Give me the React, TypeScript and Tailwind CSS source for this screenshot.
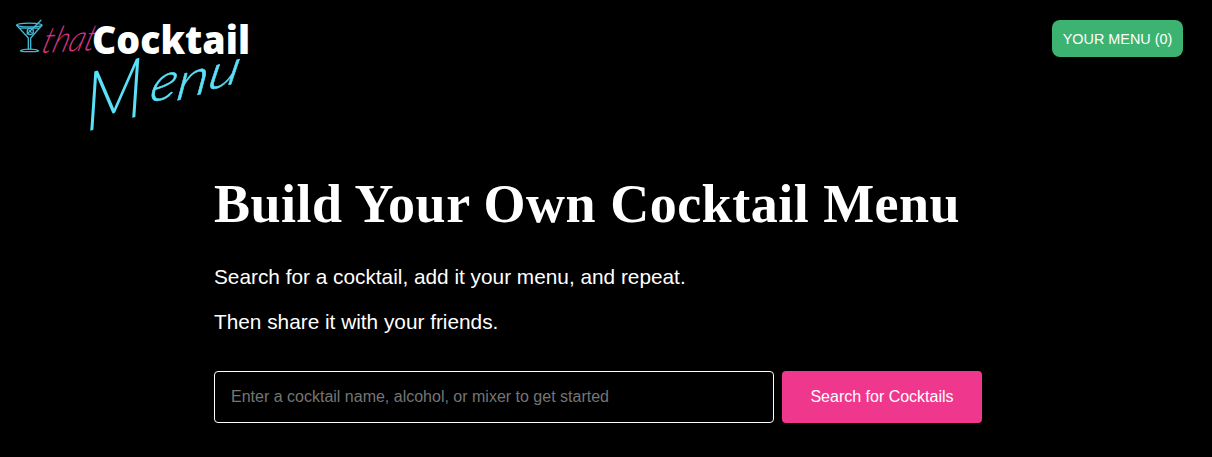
function Logo() {
  return (
    <svg width="260" height="169" viewBox="0 0 260 169" role="img" aria-label="That Cocktail Menu">
      <g fill="none" stroke="#45b9d4" strokeWidth="1.3" strokeLinecap="round" strokeLinejoin="round">
        <ellipse cx="29.3" cy="25" rx="12.6" ry="1.9" />
        <path d="M16.7 25.2 28.3 38V49M42 25.2 30.7 38V49M20.5 28.2H38" />
        <path d="M20.5 50.8C22 49.6 26 49.2 29.5 49.2S37 49.6 38.5 50.8C35 52 24 52 20.5 50.8Z" />
        <path d="M27 34 41 20.3" />
        <circle cx="30.3" cy="31.5" r="3.1" />
        <path d="M29.4 30.6 31.2 32.4" />
      </g>
      <text transform="translate(40 53) rotate(-3) skewX(-20)" fontFamily="Lato, sans-serif" fontStyle="italic" fontWeight="300" fontSize="36" fill="#cf3585" textLength="53" lengthAdjust="spacingAndGlyphs">that</text>
      <text x="92" y="53.5" fontFamily="'Open Sans', sans-serif" fontWeight="800" fontSize="38.5" fill="#fff" textLength="158" lengthAdjust="spacingAndGlyphs">Cocktail</text>
      <g fill="#5be1f7" fontFamily="Lato, sans-serif" fontStyle="italic" fontWeight="300">
        <text transform="translate(86 132) skewY(-17) skewX(2) scale(0.85 1)" fontSize="82">M</text>
        <g stroke="#5be1f7" strokeWidth="0.5">
          <text transform="translate(148 103) skewY(-13) skewX(-12) scale(1.15 1)" fontSize="50">e</text>
          <text transform="translate(175 101) skewY(-15) skewX(-8) scale(1.25 1)" fontSize="50">n</text>
          <text transform="translate(206 91) skewY(-15) skewX(-12) scale(1.35 1)" fontSize="46">u</text>
        </g>
      </g>
    </svg>
  );
}

export default function App() {
  return (
    <div className="min-h-screen bg-black text-white font-['Liberation_Sans',Arial,sans-serif]">
      <header className="flex h-[169px] items-start justify-between pr-[29px]">
        <Logo />
        <button className="mt-5 h-[37px] w-[131px] whitespace-nowrap rounded-lg bg-[#3cb371] pt-0.5 text-[14.4px]">YOUR MENU (0)</button>
      </header>
      <main className="mx-auto w-[784px]">
        <h1 className="h-[71px] whitespace-nowrap font-['Liberation_Serif',serif] text-[54px] leading-[70px] font-bold tracking-[0.5px]">Build Your Own Cocktail Menu</h1>
        <p className="mt-[22px] text-[20.8px] leading-[30px]">Search for a cocktail, add it your menu, and repeat.</p>
        <p className="mt-[15px] text-[20.8px] leading-[30px]">Then share it with your friends.</p>
        <form className="mt-[34px] flex gap-2" onSubmit={(e) => e.preventDefault()}>
          <input className="h-[52px] w-[560px] rounded border border-white bg-black px-4 text-base outline-none placeholder:text-[#757575]" placeholder="Enter a cocktail name, alcohol, or mixer to get started" />
          <button className="h-[52px] w-[200px] rounded bg-[#ee378d] text-base">Search for Cocktails</button>
        </form>
      </main>
    </div>
  );
}
